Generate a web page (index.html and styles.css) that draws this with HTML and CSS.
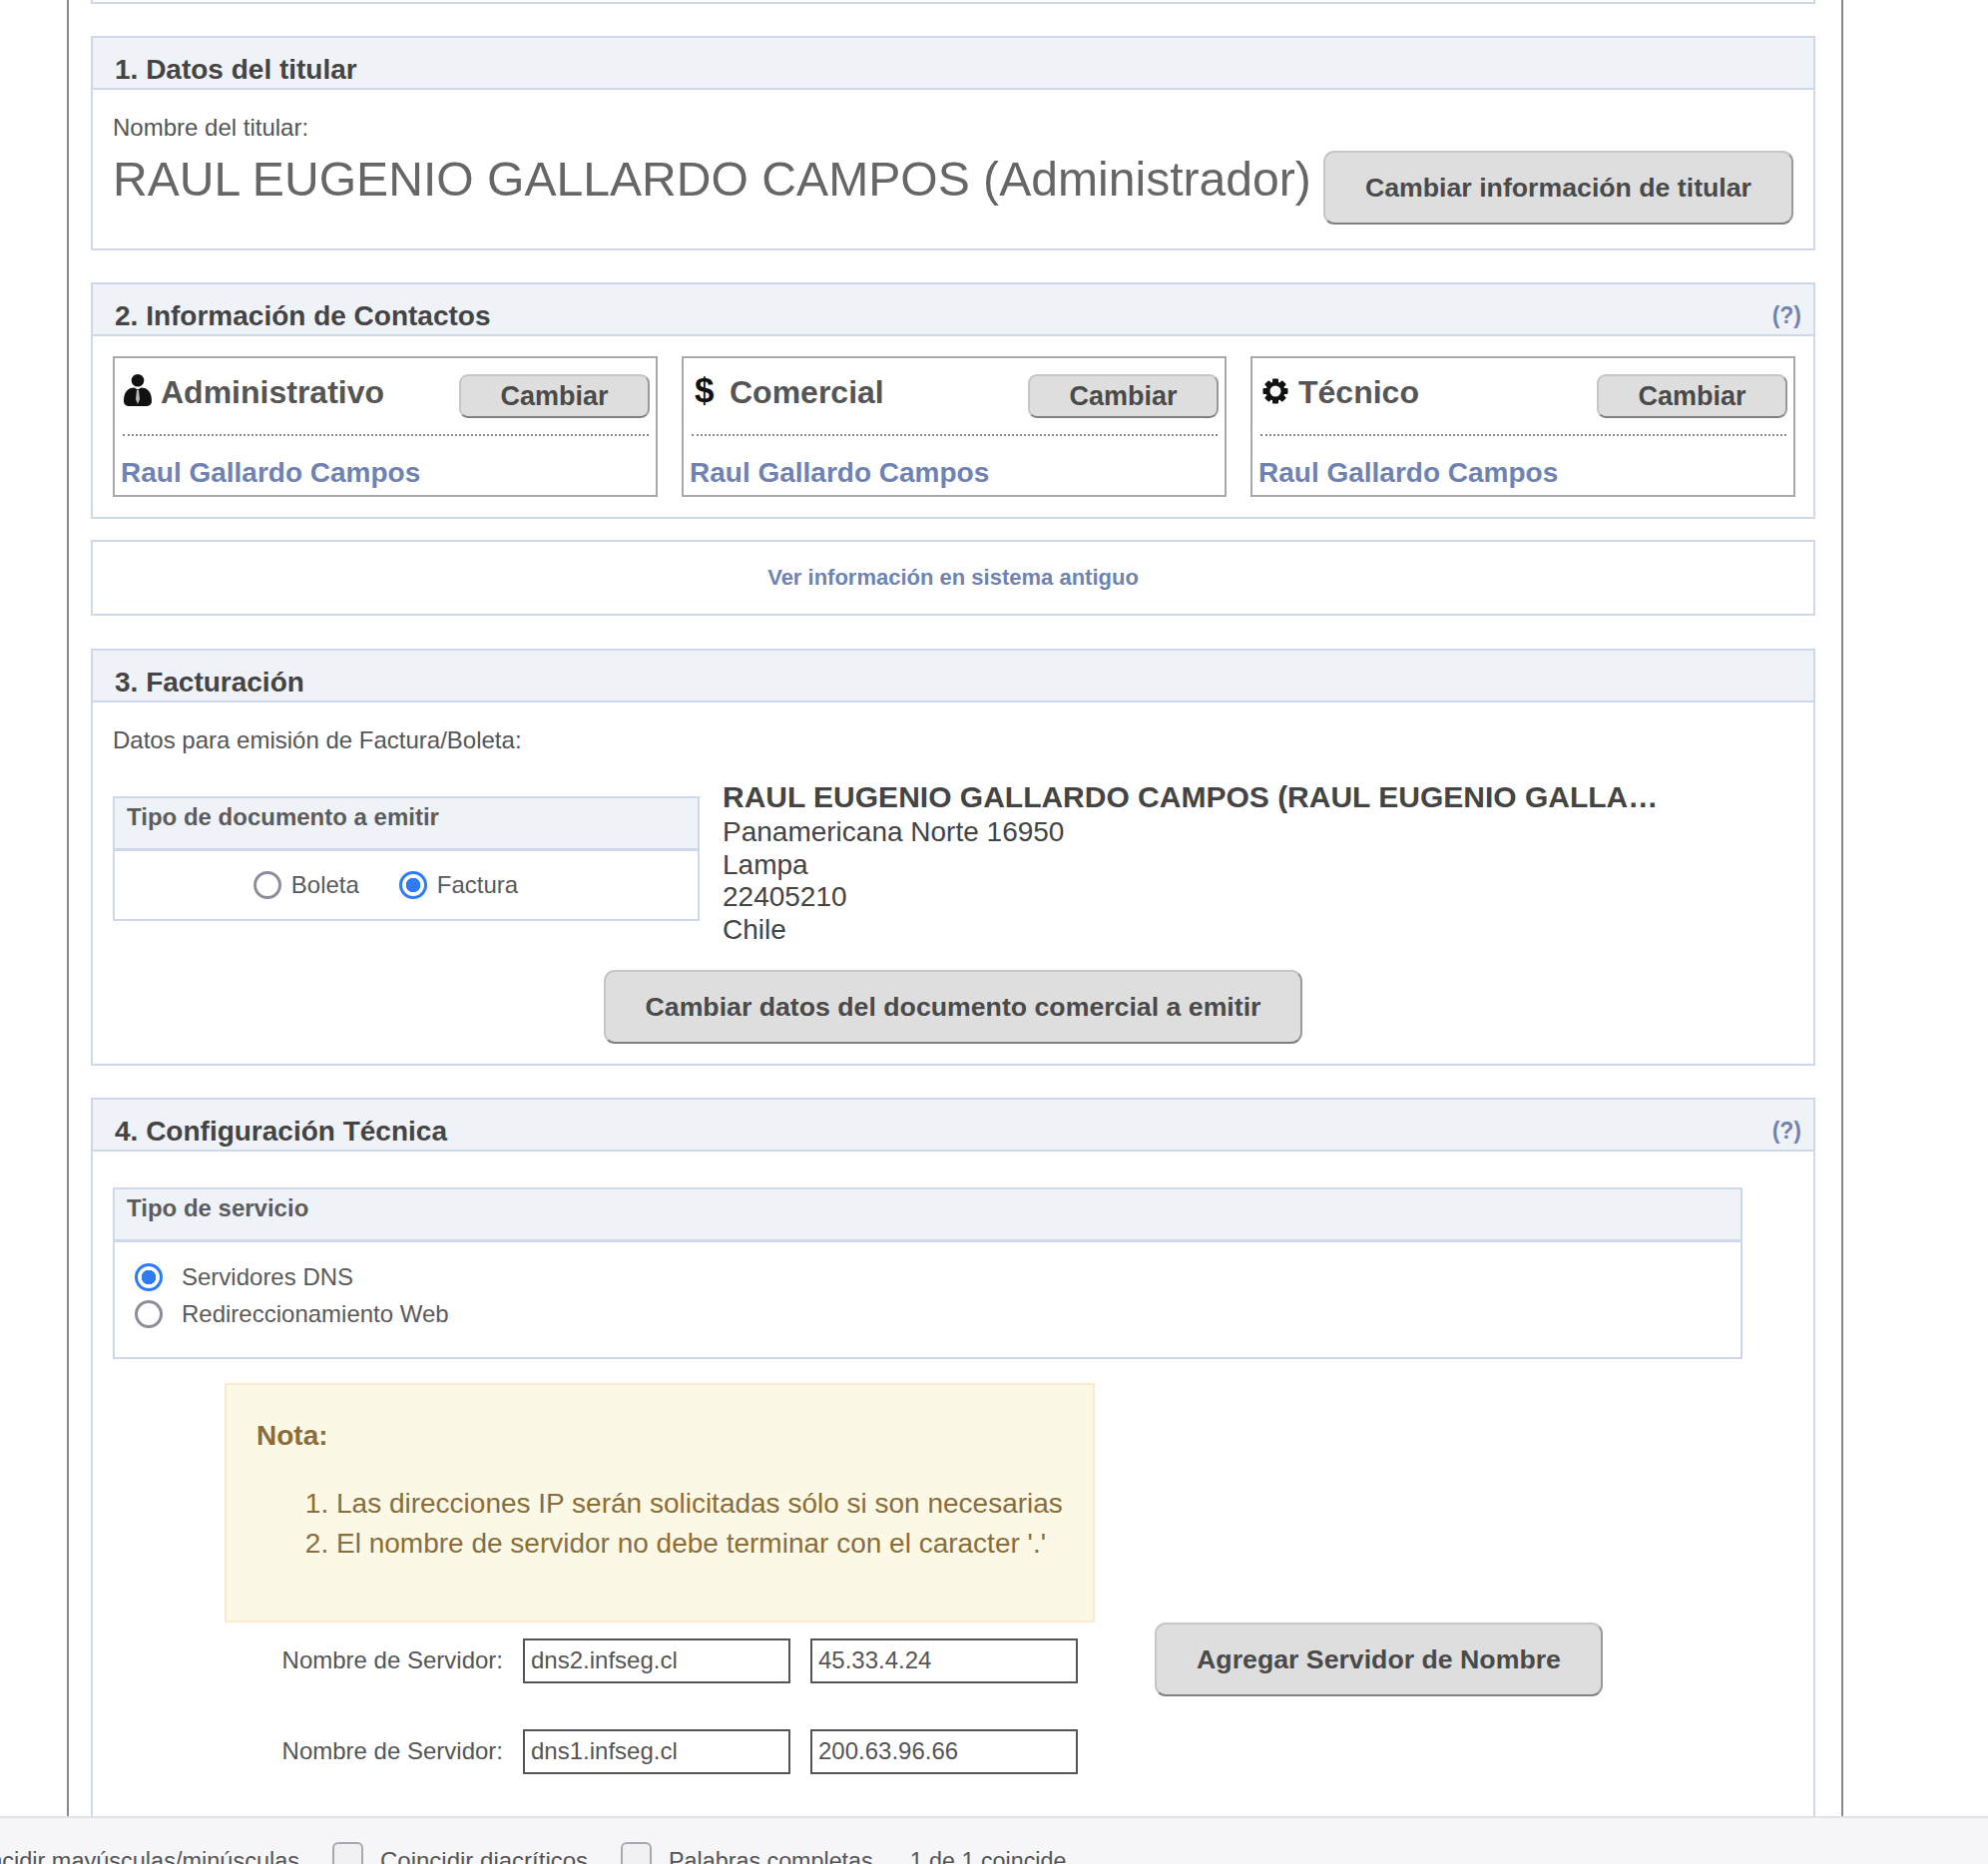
FILE: index.html
```html
<!DOCTYPE html>
<html lang="es">
<head>
<meta charset="utf-8">
<title>Datos del dominio</title>
<link rel="stylesheet" href="styles.css">
</head>
<body>
<main class="wrapper">
  <div class="stub"></div>

  <section class="panel panel-titular">
    <header class="panel-head"><h2>1. Datos del titular</h2></header>
    <div class="panel-body titular-body">
      <p class="label">Nombre del titular:</p>
      <div class="titular-row">
        <span class="titular-name">RAUL EUGENIO GALLARDO CAMPOS (Administrador)</span>
        <button class="btn btn-large btn-titular">Cambiar información de titular</button>
      </div>
    </div>
  </section>

  <section class="panel panel-contacts">
    <header class="panel-head"><h2>2. Información de Contactos</h2><a class="help">(?)</a></header>
    <div class="contacts">
      <article class="card">
        <div class="card-head">
          <span class="card-icon">
            <svg width="28" height="32" viewBox="0 0 28 32"><circle cx="14" cy="6.300" r="6.300" fill="#111"/><path d="M0 27C0 18 4 13.500 10.500 13.500L14 15.500L17.500 13.500C24 13.500 28 18 28 27C28 31 25 32 22 32H6C3 32 0 31 0 27Z" fill="#111"/><path d="M13 16h2l1 9-2 5-2-5z" fill="#bbb"/></svg>
          </span>
          <h3>Administrativo</h3>
          <button class="btn btn-small">Cambiar</button>
        </div>
        <a class="contact-link">Raul Gallardo Campos</a>
      </article>
      <article class="card">
        <div class="card-head">
          <span class="card-icon card-icon-dollar">$</span>
          <h3>Comercial</h3>
          <button class="btn btn-small">Cambiar</button>
        </div>
        <a class="contact-link">Raul Gallardo Campos</a>
      </article>
      <article class="card">
        <div class="card-head">
          <span class="card-icon card-icon-cog">
            <svg width="26" height="26" viewBox="0 0 26 26"><g fill="#111"><rect x="10" y="0.500" width="6" height="25" rx="1"/><rect x="10" y="0.500" width="6" height="25" rx="1" transform="rotate(45 13 13)"/><rect x="10" y="0.500" width="6" height="25" rx="1" transform="rotate(90 13 13)"/><rect x="10" y="0.500" width="6" height="25" rx="1" transform="rotate(135 13 13)"/><circle cx="13" cy="13" r="9.500"/></g><circle cx="13" cy="13" r="5.500" fill="#fff"/></svg>
          </span>
          <h3>Técnico</h3>
          <button class="btn btn-small">Cambiar</button>
        </div>
        <a class="contact-link">Raul Gallardo Campos</a>
      </article>
    </div>
  </section>

  <div class="legacy"><a>Ver información en sistema antiguo</a></div>

  <section class="panel panel-billing">
    <header class="panel-head"><h2>3. Facturación</h2></header>
    <div class="panel-body billing-body">
      <p class="label">Datos para emisión de Factura/Boleta:</p>
      <div class="billing-row">
        <div class="subbox doc-box">
          <h4 class="subbox-head">Tipo de documento a emitir</h4>
          <div class="doc-options">
            <label class="radio-label"><input type="radio" name="doc" class="radio">Boleta</label>
            <label class="radio-label"><input type="radio" name="doc" class="radio" checked>Factura</label>
          </div>
        </div>
        <address class="billing-address">
          <strong>RAUL EUGENIO GALLARDO CAMPOS (RAUL EUGENIO GALLARDO CAMPOS)</strong>
          <span>Panamericana Norte 16950</span>
          <span>Lampa</span>
          <span>22405210</span>
          <span>Chile</span>
        </address>
      </div>
      <div class="billing-action"><button class="btn btn-large btn-doc">Cambiar datos del documento comercial a emitir</button></div>
    </div>
  </section>

  <section class="panel panel-tech">
    <header class="panel-head"><h2>4. Configuración Técnica</h2><a class="help">(?)</a></header>
    <div class="panel-body tech-body">
      <div class="subbox service-box">
        <h4 class="subbox-head">Tipo de servicio</h4>
        <div class="service-options">
          <label class="radio-label"><input type="radio" name="svc" class="radio" checked>Servidores DNS</label>
          <label class="radio-label"><input type="radio" name="svc" class="radio">Redireccionamiento Web</label>
        </div>
      </div>
      <aside class="note">
        <h5>Nota:</h5>
        <ol>
          <li>Las direcciones IP serán solicitadas sólo si son necesarias</li>
          <li>El nombre de servidor no debe terminar con el caracter '.'</li>
        </ol>
      </aside>
      <div class="server-row">
        <label class="server-label">Nombre de Servidor:</label>
        <input class="field" type="text" value="dns2.infseg.cl">
        <input class="field" type="text" value="45.33.4.24">
        <button class="btn btn-large btn-add">Agregar Servidor de Nombre</button>
      </div>
      <div class="server-row server-row-second">
        <label class="server-label">Nombre de Servidor:</label>
        <input class="field" type="text" value="dns1.infseg.cl">
        <input class="field" type="text" value="200.63.96.66">
      </div>
    </div>
  </section>
</main>

<footer class="findbar">
  <span class="find-first">Coincidir mayúsculas/minúsculas</span>
  <span class="find-check"></span>
  <span class="find-text find-text-wide">Coincidir diacríticos</span>
  <span class="find-check"></span>
  <span class="find-text">Palabras completas</span>
  <span class="find-count">1 de 1 coincide</span>
</footer>
</body>
</html>
```
FILE: styles.css
```css
* { box-sizing: border-box; }
html, body { margin: 0; height: 100%; overflow: hidden; background: #fff; }
body { font-family: "Liberation Sans", Arial, sans-serif; color: #555; position: relative; }
h2, h3, h4, h5, p, ol { margin: 0; padding: 0; }
button { font-family: inherit; cursor: pointer; }
a { cursor: pointer; }

.wrapper {
  margin-left: 67px;
  width: 1780px;
  min-height: 2100px;
  border-left: 2px solid #8a8a8a;
  border-right: 2px solid #8a8a8a;
  padding: 0 26px 0 22px;
}
.stub { height: 4px; border: 2px solid #cdd9ea; border-top: 0; }

.panel { border: 2px solid #cdd9ea; margin-top: 32px; }
.panel-head {
  height: 52px;
  background: #eff2f7;
  border-bottom: 2px solid #cdd9ea;
  display: flex;
  justify-content: space-between;
  align-items: flex-end;
  padding: 0 12px 1px 22px;
}
.panel-head h2 { font-size: 28px; line-height: 34px; color: #444; font-weight: 700; }
.help { font-size: 23px; line-height: 34px; font-weight: 700; color: #6f83b3; margin-bottom: 1px; }

.panel-titular { height: 215px; }
.label { font-size: 24px; line-height: 28px; color: #555; }
.panel-body { padding: 0 20px; }
.titular-body { padding-top: 24px; }
.titular-row { display: flex; justify-content: space-between; align-items: flex-start; }
.titular-name { font-size: 48.100px; line-height: 60px; color: #666; white-space: nowrap; padding-top: 7px; }

.btn {
  background: #dedede;
  color: #4a4a4a;
  font-weight: 700;
  border: 2px solid #c6c6c6;
  border-right-color: #9a9a9a;
  border-bottom-color: #808080;
  white-space: nowrap;
  padding: 0;
}
.btn-large { height: 74px; border-radius: 11px; font-size: 26.700px; }
.btn-small { height: 44px; width: 191px; border-radius: 9px; font-size: 27px; margin: 0 -1px 0 auto; }
.btn-titular { width: 471px; margin-top: 9px; }

.panel-contacts { height: 237px; }
.contacts { display: grid; grid-template-columns: repeat(3, 1fr); gap: 24px; padding: 20px 18px 0 20px; }
.card { height: 141px; border: 2px solid #a9a9a9; padding: 0 7px 0 7px; }
.card-head {
  display: flex;
  align-items: flex-start;
  height: 78px;
  padding-top: 16px;
  border-bottom: 2px dotted #888;
  margin: 0 0 0 1px;
}
.card-icon { width: 32px; height: 32px; display: flex; justify-content: center; color: #111; flex: none; margin: 0 7px 0 -1px; }
.card-icon-dollar { font-size: 35px; font-weight: 700; line-height: 32px; justify-content: flex-start; padding-left: 4px; }
.card-icon-cog { padding-top: 4px; }
.card-head h3 { font-size: 32px; line-height: 38px; color: #555; font-weight: 700; margin-top: -1px; }
.contact-link { display: block; font-size: 28px; line-height: 34px; font-weight: 700; color: #6f83b3; margin: 20px 0 0 -1px; white-space: nowrap; }

.legacy {
  height: 76px;
  margin-top: 21px;
  border: 2px solid #cdd9ea;
  display: flex;
  align-items: center;
  justify-content: center;
  font-size: 22px;
  font-weight: 700;
  color: #6f83b3;
}

.panel-billing { height: 418px; margin-top: 33px; }
.billing-body { padding-top: 24px; }
.billing-row { display: flex; align-items: flex-start; margin-top: 25px; }
.subbox { border: 2px solid #cdd9ea; }
.subbox-head {
  height: 53px;
  background: #eff2f7;
  border-bottom: 3px solid #cdd9ea;
  font-size: 24px;
  line-height: 30px;
  font-weight: 700;
  color: #5c5c5c;
  padding: 4px 12px 0;
}
.doc-box { width: 588px; height: 125px; margin-top: 17px; flex: none; }
.doc-options { display: flex; justify-content: center; gap: 40px; padding: 19px 41px 0 0; }
.radio-label { display: flex; align-items: center; font-size: 24px; line-height: 30px; color: #5a5a5a; }
.radio {
  appearance: none;
  -webkit-appearance: none;
  width: 28px;
  height: 28px;
  margin: 0 10px 0 0;
  border: 3.500px solid #8e8e9a;
  border-radius: 50%;
  background: #fff;
  flex: none;
}
.radio:checked { border-color: #2f7bf6; background: radial-gradient(circle, #2f7bf6 0 7px, #fff 7.500px); }
.billing-address { flex: 1; min-width: 0; margin-left: 23px; font-style: normal; display: flex; flex-direction: column; font-size: 28px; line-height: 32.500px; color: #444; padding-right: 125px; }
.billing-address strong { overflow: hidden; text-overflow: ellipsis; white-space: nowrap; font-size: 30px; line-height: 35px; margin-bottom: 2px; color: #444; }
.billing-action { display: flex; justify-content: center; margin-top: 24px; }
.btn-doc { width: 700px; }

.panel-tech { margin-top: 32px; }
.tech-body { padding: 36px 20px 120px; }
.service-box { width: 1633px; height: 172px; }
.service-options { display: flex; flex-direction: column; gap: 7px; padding: 20px 20px 0; }
.service-options .radio { margin-right: 19px; }
.note {
  width: 872px;
  height: 240px;
  margin: 24px 0 0 112px;
  background: #fbf8e5;
  border: 2px solid #faebcc;
  color: #8a6d3b;
  padding: 33px 30px 30px;
}
.note h5 { font-size: 28px; line-height: 36px; font-weight: 700; }
.note ol { margin-top: 30px; padding-left: 80px; font-size: 28px; line-height: 40px; }
.server-row { display: flex; align-items: center; height: 74px; }
.server-row-second { margin-top: 17px; }
.server-label { width: 391px; text-align: right; font-size: 24px; color: #555; margin-right: 20px; padding-top: 2px; white-space: nowrap; }
.field {
  width: 268px;
  height: 45px;
  border: 2px solid #555;
  font-family: inherit;
  font-size: 24px;
  color: #555;
  padding: 0 6px;
  margin: 2px 20px 0 0;
  background: #fff;
  border-radius: 0;
  outline: 0;
}
.btn-add { width: 449px; margin-left: 57px; }

.findbar {
  position: fixed;
  left: 0;
  right: 0;
  bottom: 0;
  height: 48px;
  background: #f6f6f8;
  border-top: 2px solid #e2e2e2;
  display: flex;
  font-size: 23.300px;
  line-height: 30px;
  color: #555;
  overflow: hidden;
  white-space: nowrap;
}
.find-first { width: 300px; flex: none; display: flex; justify-content: flex-end; padding-top: 28px; font-size: 23.500px; }
.find-check {
  width: 31px;
  height: 30px;
  margin: 24px 0 0 33px;
  flex: none;
  border: 2px solid #a8a8b0;
  border-radius: 6px;
  background: #f1f1f4;
}
.find-text { margin-left: 17px; padding-top: 28px; }
.find-text-wide { font-size: 24px; }
.find-count { margin-left: 37px; padding-top: 28px; }
```
